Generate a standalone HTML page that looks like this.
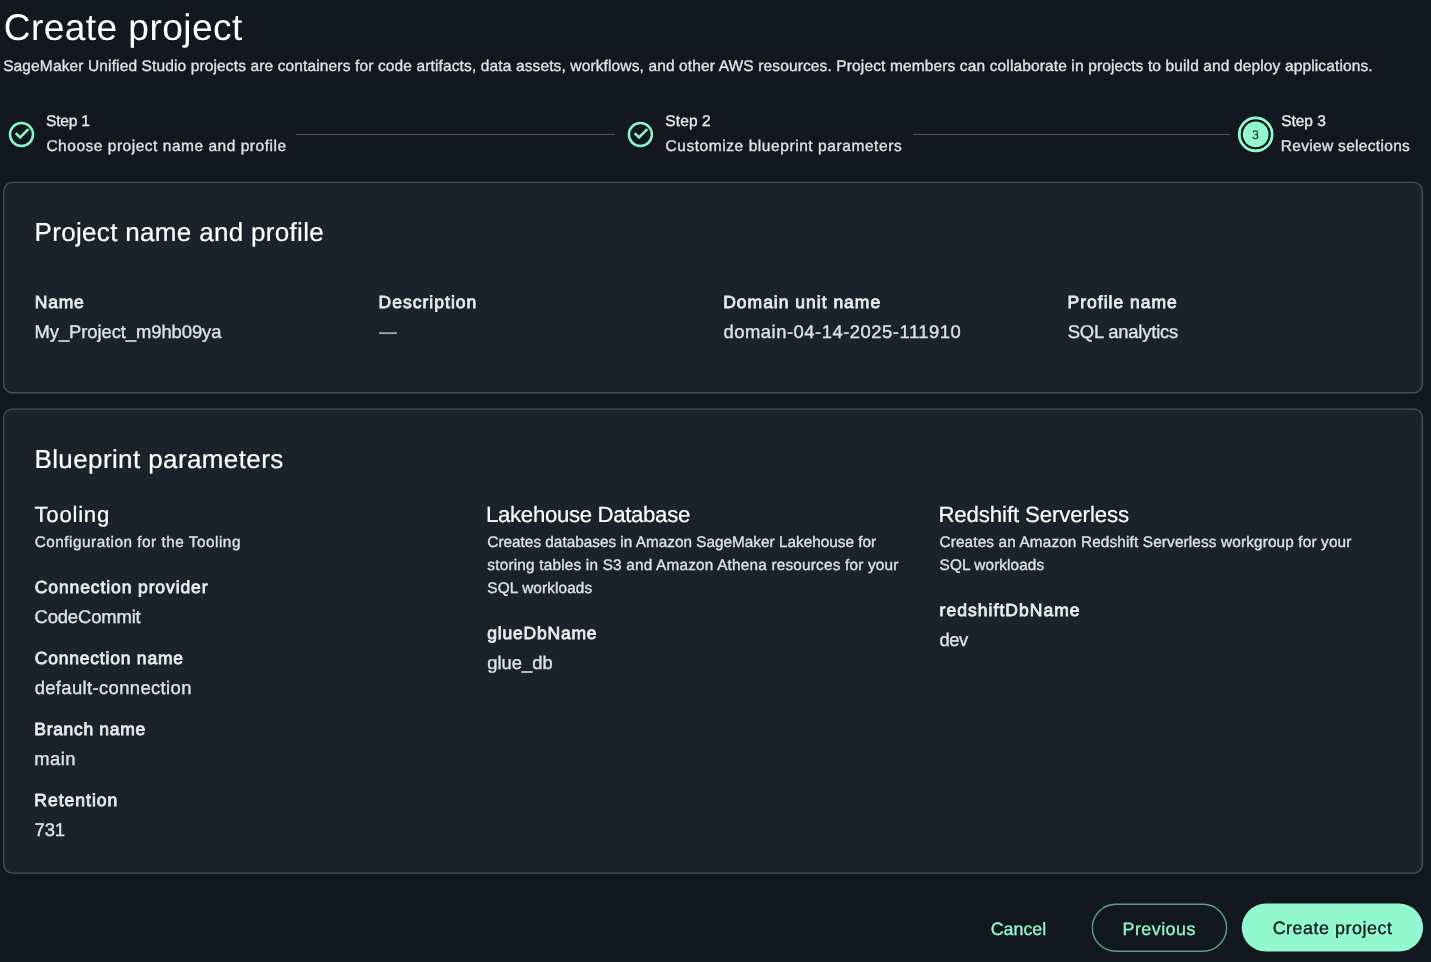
<!DOCTYPE html>
<html><head><meta charset="utf-8">
<style>
html,body{margin:0;padding:0;}
body{width:1431px;height:962px;overflow:hidden;background:#131820;position:relative;font-family:"Liberation Sans",sans-serif;}
.t{position:absolute;white-space:nowrap;line-height:1;text-rendering:geometricPrecision;will-change:transform;}
</style></head><body>
<svg style="position:absolute;left:0;top:0" width="1431" height="962" viewBox="0 0 1431 962">
  <rect x="3.7" y="182.4" width="1418.7" height="210.3" rx="8.5" fill="#1c222b" stroke="#4a4e59" stroke-width="1.4"/>
  <rect x="3.7" y="409.1" width="1418.7" height="464" rx="8.5" fill="#1c222b" stroke="#4a4e59" stroke-width="1.4"/>
  <rect x="296" y="134" width="319" height="1" fill="#545557"/>
  <rect x="913" y="134" width="317" height="1" fill="#545557"/>
  <g fill="none" stroke="#8af6ca" stroke-width="2.5">
    <circle cx="21.5" cy="134.4" r="11.5"/>
    <path d="M15.7 133.1 L20.1 137.5 L28.4 129.2"/>
    <circle cx="640.4" cy="134.4" r="11.5"/>
    <path d="M634.6 133.1 L639.0 137.5 L647.3 129.2"/>
  </g>
  <circle cx="1255.7" cy="134.4" r="16.3" fill="none" stroke="#92f9cf" stroke-width="3"/>
  <circle cx="1255.7" cy="134.4" r="14.9" fill="#0c1015"/>
  <circle cx="1255.7" cy="134.4" r="12.85" fill="#92f9cf"/>
  <rect x="1092.3" y="904.26" width="134.3" height="46.94" rx="23.47" fill="none" stroke="#5ca186" stroke-width="1.4"/>
  <rect x="1241.75" y="903.6" width="181.35" height="48" rx="24" fill="#92f9cf"/>
  <rect x="379" y="332.2" width="18" height="1.85" fill="#9ea2a9"/>
</svg>
<div class="t" style="left:1251.5px;top:128.5px;font-size:12.5px;color:#0f141a;">3</div>
<div class="t" style="left:3px;padding-left:0.76px;top:9px;font-size:37.10px;letter-spacing:0.433px;color:#ffffff;font-weight:400">Create project</div>
<div class="t" style="left:3px;padding-left:0.13px;top:59px;font-size:15.50px;letter-spacing:0.130px;color:#dfe2e6;font-weight:400;-webkit-text-stroke:0.35px #dfe2e6">SageMaker Unified Studio projects are containers for code artifacts, data assets, workflows, and other AWS resources. Project members can collaborate in projects to build and deploy applications.</div>
<div class="t" style="left:46px;padding-left:0.06px;top:114px;font-size:15.50px;letter-spacing:-0.183px;color:#e9ebed;font-weight:400;-webkit-text-stroke:0.35px #e9ebed">Step 1</div>
<div class="t" style="left:46px;padding-left:0.40px;top:139px;font-size:15.50px;letter-spacing:0.521px;color:#dfe2e6;font-weight:400;-webkit-text-stroke:0.35px #dfe2e6">Choose project name and profile</div>
<div class="t" style="left:665px;padding-left:0.36px;top:114px;font-size:15.50px;letter-spacing:0.112px;color:#e9ebed;font-weight:400;-webkit-text-stroke:0.35px #e9ebed">Step 2</div>
<div class="t" style="left:665px;padding-left:0.46px;top:139px;font-size:15.50px;letter-spacing:0.569px;color:#dfe2e6;font-weight:400;-webkit-text-stroke:0.35px #dfe2e6">Customize blueprint parameters</div>
<div class="t" style="left:1281px;padding-left:0.15px;top:114px;font-size:15.50px;letter-spacing:-0.026px;color:#e9ebed;font-weight:400;-webkit-text-stroke:0.35px #e9ebed">Step 3</div>
<div class="t" style="left:1280px;padding-left:0.80px;top:139px;font-size:15.50px;letter-spacing:0.310px;color:#dfe2e6;font-weight:400;-webkit-text-stroke:0.35px #dfe2e6">Review selections</div>
<div class="t" style="left:34px;padding-left:0.55px;top:219px;font-size:26.00px;letter-spacing:0.322px;color:#ffffff;font-weight:400;-webkit-text-stroke:0.2px #ffffff">Project name and profile</div>
<div class="t" style="left:34px;padding-left:0.81px;top:294px;font-size:17.50px;letter-spacing:0.749px;color:#e9ebed;font-weight:400;-webkit-text-stroke:0.8px #e9ebed">Name</div>
<div class="t" style="left:34px;padding-left:0.51px;top:323px;font-size:18.40px;letter-spacing:-0.065px;color:#dfe2e6;font-weight:400;-webkit-text-stroke:0.35px #dfe2e6">My_Project_m9hb09ya</div>
<div class="t" style="left:378px;padding-left:0.55px;top:294px;font-size:17.50px;letter-spacing:1.021px;color:#e9ebed;font-weight:400;-webkit-text-stroke:0.8px #e9ebed">Description</div>
<div class="t" style="left:723px;padding-left:0.20px;top:294px;font-size:17.50px;letter-spacing:0.997px;color:#e9ebed;font-weight:400;-webkit-text-stroke:0.8px #e9ebed">Domain unit name</div>
<div class="t" style="left:723px;padding-left:0.44px;top:323px;font-size:18.40px;letter-spacing:0.524px;color:#dfe2e6;font-weight:400;-webkit-text-stroke:0.35px #dfe2e6">domain-04-14-2025-111910</div>
<div class="t" style="left:1067px;padding-left:0.61px;top:294px;font-size:17.50px;letter-spacing:0.995px;color:#e9ebed;font-weight:400;-webkit-text-stroke:0.8px #e9ebed">Profile name</div>
<div class="t" style="left:1067px;padding-left:0.72px;top:323px;font-size:18.40px;letter-spacing:-0.185px;color:#dfe2e6;font-weight:400;-webkit-text-stroke:0.35px #dfe2e6">SQL analytics</div>
<div class="t" style="left:34px;padding-left:0.43px;top:446px;font-size:26.00px;letter-spacing:0.392px;color:#ffffff;font-weight:400;-webkit-text-stroke:0.2px #ffffff">Blueprint parameters</div>
<div class="t" style="left:34px;padding-left:0.54px;top:504px;font-size:22.20px;letter-spacing:0.735px;color:#ffffff;font-weight:400;-webkit-text-stroke:0.2px #ffffff">Tooling</div>
<div class="t" style="left:34px;padding-left:0.70px;top:535px;font-size:15.30px;letter-spacing:0.524px;color:#dfe2e6;font-weight:400;-webkit-text-stroke:0.35px #dfe2e6">Configuration for the Tooling</div>
<div class="t" style="left:34px;padding-left:0.83px;top:579px;font-size:17.50px;letter-spacing:0.891px;color:#e9ebed;font-weight:400;-webkit-text-stroke:0.8px #e9ebed">Connection provider</div>
<div class="t" style="left:34px;padding-left:0.51px;top:608px;font-size:18.40px;letter-spacing:-0.123px;color:#dfe2e6;font-weight:400;-webkit-text-stroke:0.35px #dfe2e6">CodeCommit</div>
<div class="t" style="left:34px;padding-left:0.83px;top:650px;font-size:17.50px;letter-spacing:0.786px;color:#e9ebed;font-weight:400;-webkit-text-stroke:0.8px #e9ebed">Connection name</div>
<div class="t" style="left:34px;padding-left:0.64px;top:679px;font-size:18.40px;letter-spacing:0.379px;color:#dfe2e6;font-weight:400;-webkit-text-stroke:0.35px #dfe2e6">default-connection</div>
<div class="t" style="left:34px;padding-left:0.32px;top:721px;font-size:17.50px;letter-spacing:0.672px;color:#e9ebed;font-weight:400;-webkit-text-stroke:0.8px #e9ebed">Branch name</div>
<div class="t" style="left:34px;padding-left:0.30px;top:750px;font-size:18.40px;letter-spacing:0.467px;color:#dfe2e6;font-weight:400;-webkit-text-stroke:0.35px #dfe2e6">main</div>
<div class="t" style="left:34px;padding-left:0.32px;top:792px;font-size:17.50px;letter-spacing:1.009px;color:#e9ebed;font-weight:400;-webkit-text-stroke:0.8px #e9ebed">Retention</div>
<div class="t" style="left:34px;padding-left:0.61px;top:821px;font-size:18.40px;letter-spacing:-0.184px;color:#dfe2e6;font-weight:400;-webkit-text-stroke:0.35px #dfe2e6">731</div>
<div class="t" style="left:486px;padding-left:0.09px;top:504px;font-size:22.20px;letter-spacing:-0.326px;color:#ffffff;font-weight:400;-webkit-text-stroke:0.2px #ffffff">Lakehouse Database</div>
<div class="t" style="left:487px;padding-left:0.37px;top:535px;font-size:15.30px;letter-spacing:0.020px;color:#dfe2e6;font-weight:400;-webkit-text-stroke:0.35px #dfe2e6">Creates databases in Amazon SageMaker Lakehouse for</div>
<div class="t" style="left:487px;padding-left:0.33px;top:558px;font-size:15.30px;letter-spacing:0.219px;color:#dfe2e6;font-weight:400;-webkit-text-stroke:0.35px #dfe2e6">storing tables in S3 and Amazon Athena resources for your</div>
<div class="t" style="left:487px;padding-left:0.35px;top:581px;font-size:15.30px;letter-spacing:0.136px;color:#dfe2e6;font-weight:400;-webkit-text-stroke:0.35px #dfe2e6">SQL workloads</div>
<div class="t" style="left:487px;padding-left:0.27px;top:625px;font-size:17.50px;letter-spacing:0.790px;color:#e9ebed;font-weight:400;-webkit-text-stroke:0.8px #e9ebed">glueDbName</div>
<div class="t" style="left:487px;padding-left:0.21px;top:654px;font-size:18.40px;letter-spacing:0.018px;color:#dfe2e6;font-weight:400;-webkit-text-stroke:0.35px #dfe2e6">glue_db</div>
<div class="t" style="left:938px;padding-left:0.38px;top:504px;font-size:22.20px;letter-spacing:-0.091px;color:#ffffff;font-weight:400;-webkit-text-stroke:0.2px #ffffff">Redshift Serverless</div>
<div class="t" style="left:939px;padding-left:0.45px;top:535px;font-size:15.30px;letter-spacing:0.162px;color:#dfe2e6;font-weight:400;-webkit-text-stroke:0.35px #dfe2e6">Creates an Amazon Redshift Serverless workgroup for your</div>
<div class="t" style="left:939px;padding-left:0.62px;top:558px;font-size:15.30px;letter-spacing:0.112px;color:#dfe2e6;font-weight:400;-webkit-text-stroke:0.35px #dfe2e6">SQL workloads</div>
<div class="t" style="left:939px;padding-left:0.55px;top:602px;font-size:17.50px;letter-spacing:1.044px;color:#e9ebed;font-weight:400;-webkit-text-stroke:0.8px #e9ebed">redshiftDbName</div>
<div class="t" style="left:939px;padding-left:0.44px;top:631px;font-size:18.40px;letter-spacing:-0.446px;color:#dfe2e6;font-weight:400;-webkit-text-stroke:0.35px #dfe2e6">dev</div>
<div class="t" style="left:990px;padding-left:0.73px;top:921px;font-size:17.90px;letter-spacing:-0.030px;color:#92f9cf;font-weight:400;-webkit-text-stroke:0.3px #92f9cf">Cancel</div>
<div class="t" style="left:1122px;padding-left:0.57px;top:921px;font-size:17.90px;letter-spacing:0.453px;color:#92f9cf;font-weight:400;-webkit-text-stroke:0.3px #92f9cf">Previous</div>
<div class="t" style="left:1272px;padding-left:0.66px;top:920px;font-size:17.90px;letter-spacing:0.529px;color:#0f141a;font-weight:400;-webkit-text-stroke:0.3px #0f141a">Create project</div>
</body></html>
